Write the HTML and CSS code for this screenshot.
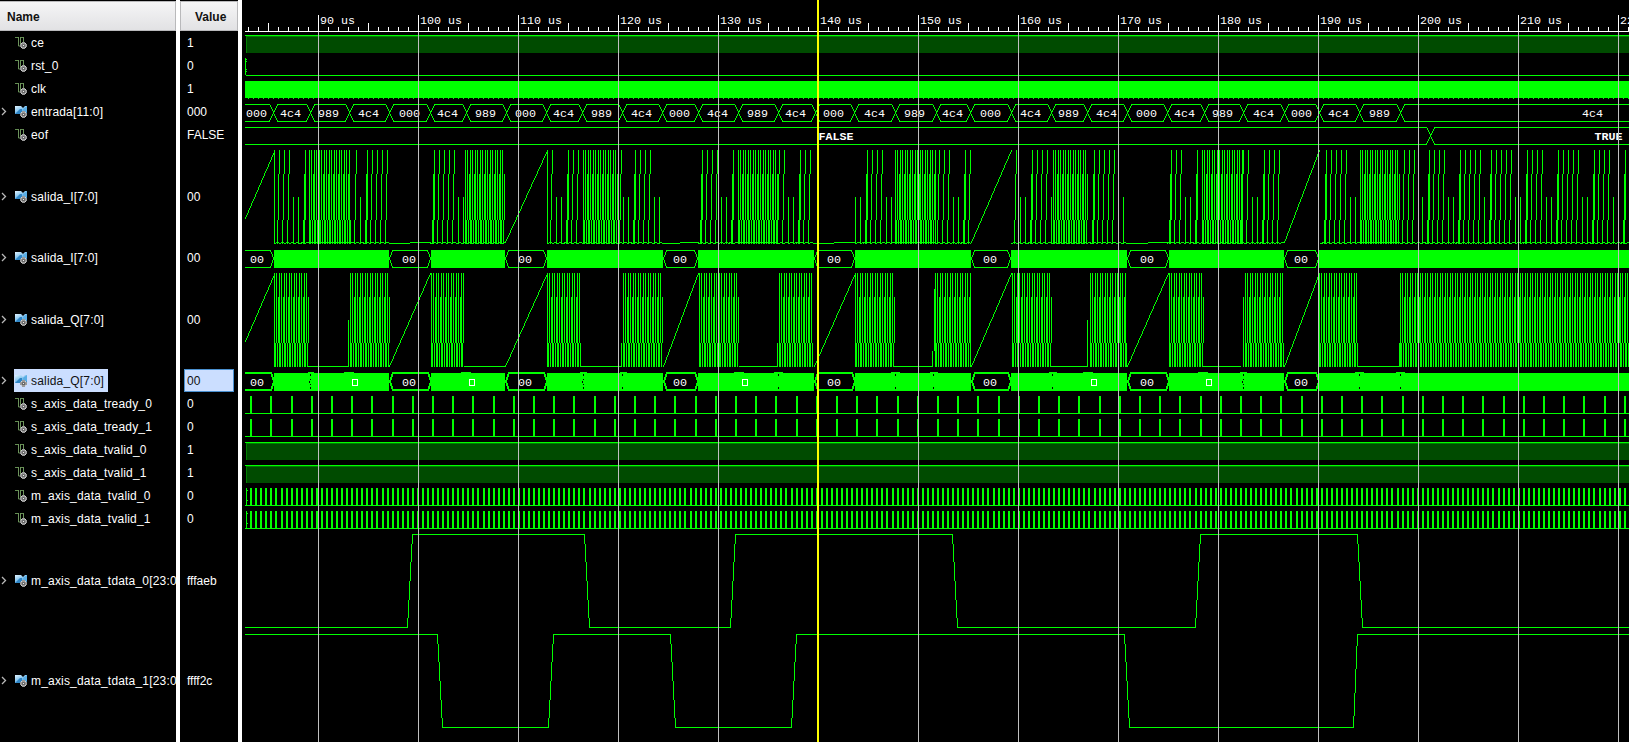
FILE: index.html
```html
<!DOCTYPE html>
<html lang="en">
<head>
<meta charset="utf-8">
<title>Waveform</title>
<link rel="stylesheet" href="styles.css">
</head>
<body>
<svg class="defs" aria-hidden="true">
  <defs>
    <linearGradient id="blue" x1="0" y1="0" x2=".7" y2="1"><stop offset="0" stop-color="#e2f4ff"/><stop offset=".5" stop-color="#8cc8f0"/><stop offset="1" stop-color="#3d95d6"/></linearGradient>
  </defs>
  <symbol id="gear" viewBox="0 0 7 7"><path d="M2 0h3v1h1v1h1v3H6v1H5v1H2V6H1V5H0V2h1V1h1z" fill="#9a9a9a"/><path d="M1 1h1v1H1zM5 1h1v1H5zM1 5h1v1H1zM5 5h1v1H5z" fill="#d0d0d0"/><circle cx="3.5" cy="3.5" r="1.6" fill="#4b4b4b"/><circle cx="3.5" cy="3.5" r=".8" fill="#eee"/></symbol>
  <symbol id="scalar" viewBox="0 0 12 12"><path d="M0 .5h3M5 .5h3.500" fill="none" stroke="#628b50"/><path d="M3.500 0v9h2V0M8.500 0v6" fill="none" stroke="#6d945c"/><use href="#gear" x="5" y="5" width="7" height="7"/></symbol>
  <symbol id="bus" viewBox="0 0 12 12"><path d="M0 0h6l2 2 2-2h2v7H8L7 6 5 8H0z" fill="url(#blue)"/><path d="M0 8l5-5h2v3L5 8z" fill="#2f86c6"/><path d="M8 3l4-3v6H9z" fill="#5aaee6"/><use href="#gear" x="5" y="5" width="7" height="7"/></symbol>
</svg>
<main class="viewer">
  <section class="names"><header class="head">Name</header><div id="names"></div></section>
  <section class="values"><header class="head">Value</header><div id="values"></div></section>
  <section class="waves"><svg id="canvas" width="1387" height="742" viewBox="242 0 1387 742" shape-rendering="crispEdges"></svg></section>
</main>
<script src="waves.js"></script>
</body>
</html>
```
FILE: styles.css
```css
* { box-sizing: border-box; }
body { margin: 0; background: #000; overflow: hidden; font-family: "Liberation Sans", Arial, sans-serif; font-size: 12px; color: #fff; }
.defs { position: absolute; width: 0; height: 0; }
.viewer { display: flex; height: 742px; background: #fff; }
.names, .values, .waves { background: #000; overflow: hidden; flex: none; }
.names { width: 176px; margin-right: 4px; }
.values { width: 58px; margin-right: 4px; }
.waves { width: 1387px; }
.waves svg { display: block; }
.head { height: 30px; margin-top: 1px; padding-left: 7px; line-height: 31px; font-weight: bold; color: #111; background: linear-gradient(#f5f5f6, #e2e2e4); border: 1px solid #b9b9bb; border-left: 0; }
.values .head { padding-left: 14px; border-left: 1px solid #b9b9bb; }
.row { display: flex; align-items: center; height: 23px; white-space: nowrap; }
.row.tall { height: 100px; padding-top: 1px; }
.row .chevron { flex: none; width: 14px; height: 9px; fill: none; stroke: #b8b8b8; stroke-width: 1.3; }
.row .label { display: flex; align-items: center; height: 23px; padding: 0 4px 0 1px; gap: 4px; letter-spacing: .18px; }
.row .icon { width: 12px; height: 12px; flex: none; }
.names .selected .label { background: #cbdeff; color: #111; }
.value { height: 23px; line-height: 24px; flex: 1; margin: 0 4px; padding-left: 3px; }
.values .selected .value { background: #cbdeff; color: #111; line-height: 22px; padding-left: 2px; border: 1px solid #4a90d0; }
.mono { font-family: "Liberation Mono", "Courier New", monospace; font-size: 11.67px; fill: #fff; }
.strong { font-weight: bold; }
.wave { fill: #0f0; }
.shade { fill: #004b00; }
.shade-edge { fill: #008000; }
.hole { fill: #000; }
.grid { fill: #c0c0c0; }
.ruler { fill: #fff; }
.cursor { fill: #ff0; }
.marker { fill: none; stroke: #fff; stroke-width: 1; }
```
FILE: waves.js
```js
const signals = [
  ['ce', '1'], ['rst_0', '0'], ['clk', '1'], ['entrada[11:0]', '000', 'bus'], ['eof', 'FALSE'],
  ['salida_I[7:0]', '00', 'bus', 'tall'], ['salida_I[7:0]', '00', 'bus'],
  ['salida_Q[7:0]', '00', 'bus', 'tall'], ['salida_Q[7:0]', '00', 'bus', 'selected'],
  ['s_axis_data_tready_0', '0'], ['s_axis_data_tready_1', '0'],
  ['s_axis_data_tvalid_0', '1'], ['s_axis_data_tvalid_1', '1'],
  ['m_axis_data_tvalid_0', '0'], ['m_axis_data_tvalid_1', '0'],
  ['m_axis_data_tdata_0[23:0]', 'fffaeb', 'bus', 'tall'], ['m_axis_data_tdata_1[23:0]', 'ffff2c', 'bus', 'tall']
];
document.getElementById('names').innerHTML = signals.map(([n, , k, c]) =>
  `<div class="row ${c || ''}"><svg class="chevron" viewBox="0 0 14 9">${k ? '<path d="M2 1l3.500 3.500L2 8"/>' : ''}</svg><span class="label"><svg class="icon"><use href="#${k || 'scalar'}"/></svg>${n}</span></div>`).join('');
document.getElementById('values').innerHTML = signals.map(([, v, , c]) =>
  `<div class="row ${c || ''}"><span class="value">${v}</span></div>`).join('');

const END = 1629, START = 245;
const layers = { shade: '', 'shade-edge': '', wave: '', hole: '', ruler: '', grid: '', cursor: '' };
let texts = '', markers = '';
const rect = (x, y, w, h, l = 'wave') => { layers[l] += `M${x} ${y}h${w}v${h}h${-w}z`; };
const text = (x, y, s, a = 'middle', c = '') => { texts += `<text class="mono ${c}" x="${x}" y="${y}" text-anchor="${a}">${s}</text>`; };

// Integer line rasteriser so that slopes stay one pixel wide
function line(x0, y0, x1, y1, w = 1) {
  x0 = Math.floor(x0); x1 = Math.floor(x1);
  const dx = x1 - x0, dy = y1 - y0, n = Math.max(Math.abs(dx), Math.abs(dy));
  for (let i = 0; i <= n; i++) rect(Math.round(x0 + dx * i / n), Math.round(y0 + dy * i / n), w, 1);
}
function cell(a, b, y, w = 1, d = 3) {
  const t = y + 4, u = y + 21, m = y + 12;
  const l = a <= START ? START : a + d, r = b >= END ? END : b - d;
  const top = w > 1 ? t - 1 : t;
  rect(l, top, r - l, w); rect(l, w > 1 ? u - 1 : u, r - l, w);
  if (a > START) { line(a, m, l, top, w); line(a, m, l, u, w); }
  if (b < END) { line(b, m, r, top, w); line(b, m, r, u, w); }
}

// Time ruler
rect(START, 31, END - START, 1, 'ruler');
for (let x = 248; x < END; x += 10) {
  const k = (x - 318) / 10;
  if (k % 10 === 0) {
    rect(x, 15, 1, 17, 'ruler');
    text(x + 2, 24, `${90 + k} us`, 'start');
  } else if (k % 5 === 0) rect(x, 23, 1, 8, 'ruler');
  else rect(x, 27, 1, 4, 'ruler');
}

// Steady-high scalars
[31, 438, 461].forEach(y => {
  rect(START, y + 4, END - START, 1);
  rect(246, y + 5, END - 246, 17, 'shade');
  rect(246, y + 5, END - 246, 1, 'shade-edge');
  rect(246, y + 5, 1, 17, 'shade-edge');
});
// rst_0
rect(245, 58, 1, 17); rect(246, 75, END, 1);
[59, 61, 69, 71].forEach(y => rect(246, y, 1, 1));
// clk
rect(START, 81, END - START, 17);
for (let x = 248; x < END; x += 5) rect(x, 98, 1, 1);

// entrada
const edges = [245, 273, 310, 349, 389, 430, 466, 506, 546, 582, 622, 662, 698, 738, 778, 815, 854, 895, 936, 970, 1011, 1051, 1087, 1127, 1167, 1204, 1243, 1284, 1319, 1359, 1400, 1640];
const mids = [256.5, 290.5, 328.5, 368.5, 409.5, 447.500, 485.5, 525.5, 563.5, 601.5, 641.5, 679.5, 717.5, 757.5, 795.5, 833.5, 874.5, 914.5, 952.5, 990.5, 1030.5, 1068.5, 1106.5, 1146.5, 1184.5, 1222.5, 1263.5, 1301.5, 1338.5, 1379.5, 1592.5];
const words = '000 4c4 989 4c4 000 4c4 989 000 4c4 989 4c4 000 4c4 989 4c4 000 4c4 989 4c4 000 4c4 989 4c4 000 4c4 989 4c4 000 4c4 989 4c4'.split(' ');
words.forEach((s, i) => { cell(edges[i], edges[i + 1], 100, 1, 4); text(mids[i], 117, s); });
// eof
cell(START, 1430, 123, 1, 4); cell(1430, 1640, 123, 1, 4);
text(818.5, 140, 'FALSE', 'start', 'strong'); text(1594.5, 140, 'TRUE', 'start', 'strong');

// Bus rows of salida_I and salida_Q
const idle = [[245, 273, 257], [389, 430, 409], [505, 546, 525], [663, 697, 680], [814, 854, 834], [971, 1010, 990], [1127, 1168, 1147], [1284, 1318, 1301]];
idle.forEach(([a, b, m], i) => {
  const next = i < 7 ? idle[i + 1][0] : END;
  cell(a, b, 246); rect(b + 1, 250, next - b - 1, 18); text(m, 263, '00');
  cell(a, b, 369, 2); rect(b + 1, 373, next - b - 1, 18); text(m, 386, '00');
});
[[308, 314], [344, 354], [461, 471], [580, 587], [620, 627], [734, 744], [774, 783], [891, 900], [930, 938], [1049, 1057], [1083, 1093], [1198, 1208], [1240, 1247], [1355, 1364], [1396, 1405]].forEach(([a, b]) => rect(a, 372, b - a, 1));
[310, 583, 622, 778, 895, 933, 1052, 1243, 1359, 1400].forEach(x => { rect(x, 374, 1, 2, 'hole'); rect(x, 387, 1, 2, 'hole'); });
[310, 583, 1243].forEach(x => { rect(x - 1, 381, 1, 2, 'hole'); rect(x, 379, 1, 1, 'hole'); rect(x, 384, 1, 1, 'hole'); });
[352, 469, 742, 1091, 1206].forEach(x => { markers += `<rect class="marker" x="${x + .5}" y="379.5" width="5" height="6"/>`; });

// Analog rows: t is the y of full scale
function dense(a, b, t) {
  for (let x = a; x < b; x++) {
    const p = (x - a) % 5;
    if (p === 0 || p === 2) rect(x, t, 1, 24);
    if (p === 0 || p === 2 || p === 4) rect(x, t + 24, 1, 46);
    if (p === 0 || p === 1 || p === 3) rect(x, t + 70, 1, 24);
  }
}
function full(x, t, wide) {
  rect(x, t, 1, 24); rect(x - 1, t + 24, 1, 46); rect(x - 2, t + 70, 1, 24);
  if (wide) { rect(x, t + 24, 1, 46); rect(x - 1, t + 70, 1, 24); rect(x - 4, t + 92, 1, 2); }
}
const spikes = [
  'S274 F279 F284 F289 H293 H298 W305 D309-351 F356 H360 W367 F372 F377 F382 F387',
  'W434 F439 F444 F449 F454 H458 H463 D465-505',
  'S547 F552 H556 H561 W568 F573 F578 D583-620 F621 H623 H628 W635 F640 F645 F650 H654 H659',
  'W702 F707 F712 F717 H721 H726 W733 D738-778 F779 F784 H788 H793 W800 F805 F810',
  'H855 H860 W867 F872 F877 F882 H886 H891 D895-936 F939 F944 F949 H953 H958 W965 F970',
  'F1016 H1020 H1025 W1032 F1037 F1042 F1047 H1051 D1053-1088 W1094 F1099 F1104 F1109 F1114 H1123',
  'W1171 F1176 F1181 H1185 H1190 W1197 D1202-1243 F1243 F1248 H1252 H1257 W1264 F1269 F1274 F1279',
  'W1326 F1331 F1336 F1341 F1346 H1350 H1355 D1360-1400 F1404 F1409 F1414 H1418 H1422 W1429 F1434 F1439 F1444 H1448 H1453 W1460 F1465 F1470 F1475 F1480 H1484 W1491 F1496 F1501 F1506 F1511 H1515 H1520 W1527 F1532 F1537 F1542 H1546 H1551 W1558 F1563 F1568 F1573 F1578 H1582 H1587 W1594 F1599 F1604 F1609 H1613 W1625'
].join(' ').split(' ');
spikes.forEach(s => {
  const k = s[0], [x, e] = s.slice(1).split('-').map(Number);
  if (k === 'S') rect(x, 150, 1, 94);
  if (k === 'F' || k === 'W') full(x, 150, k === 'W');
  if (k === 'H') rect(x, 197, 1, 47);
  if (k === 'D') dense(x, e, 150);
});
[[274, 389], [431, 505], [547, 662], [698, 813], [855, 971], [1011, 1127], [1169, 1284], [1320, END]].forEach(([a, b]) => {
  for (let x = a; x < b; x++) rect(x, (x - a) % 5 < 2 ? 243 : 242, 1, 1);
});
[[389, 410, 431], [662, 680, 699], [813, 834, 855], [1127, 1148, 1169]].forEach(([a, m, b]) => {
  rect(a, 243, m - a, 1); rect(m, 242, b - m, 1);
});
line(245, 218, 274, 151);
line(505, 242, 547, 150); line(971, 242, 1011, 150); line(1284, 242, 1319, 150);

line(245, 341, 274, 274);
[[389, 430], [505, 547], [663, 698], [814, 855], [971, 1011], [1127, 1168], [1284, 1319]].forEach(([a, b]) => line(a, 366, b, 273));
[[274, 309], [350, 390], [431, 464], [547, 581], [623, 663], [699, 739], [779, 813], [855, 895], [935, 971], [1012, 1052], [1090, 1127], [1169, 1204], [1245, 1284], [1319, 1358], [1400, END]].forEach(([a, b]) => dense(a, b, 273));
[[308, 349], [464, 505], [581, 621], [739, 777], [894, 932], [1051, 1088], [1203, 1241], [1358, 1399]].forEach(([a, b]) => rect(a, 366, b - a, 1));
rect(348, 320, 1, 47); rect(621, 343, 1, 24); rect(777, 343, 1, 24); rect(934, 289, 1, 62); rect(932, 351, 1, 16); rect(1087, 320, 1, 47); rect(1243, 297, 1, 70); rect(1399, 343, 1, 24);

// Handshake pulses
[[392, 20.2], [415, 20.2], [484, 5.05], [507, 5.05]].forEach(([y, step]) => {
  rect(START, y + 21, END - START, 1);
  for (let x = 250.7; x < END; x += step) rect(Math.floor(x), y + 4, 2, 17);
  if (step < 10) { rect(246, y + 4, 1, 17); rect(247, y + 6, 1, 1); rect(247, y + 16, 1, 1); }
});

// Slow analog data
function steps(pts) { for (let i = 1; i < pts.length; i++) line(...pts[i - 1], ...pts[i]); }
const hi = 534, lo = 627;
steps([[245, lo], [407, lo], [412, hi], [584, hi], [589, lo], [730, lo], [735, hi], [952, hi], [957, lo], [1195, lo], [1200, hi], [1357, hi], [1362, lo], [END, lo]]);
steps([[245, 634], [437, 634], [442, 727], [548, 727], [553, 634], [670, 634], [675, 727], [791, 727], [796, 634], [1124, 634], [1129, 727], [1353, 727], [1357, 634], [END, 634]]);

for (let x = 318; x < END; x += 100) rect(x, 32, 1, 710, 'grid');
rect(817, 0, 2, 742, 'cursor');

const p = k => `<path class="${k}" d="${layers[k]}"/>`;
document.getElementById('canvas').innerHTML = ['shade', 'shade-edge', 'wave', 'hole'].map(p).join('') + texts + markers + ['ruler', 'grid', 'cursor'].map(p).join('');
```
